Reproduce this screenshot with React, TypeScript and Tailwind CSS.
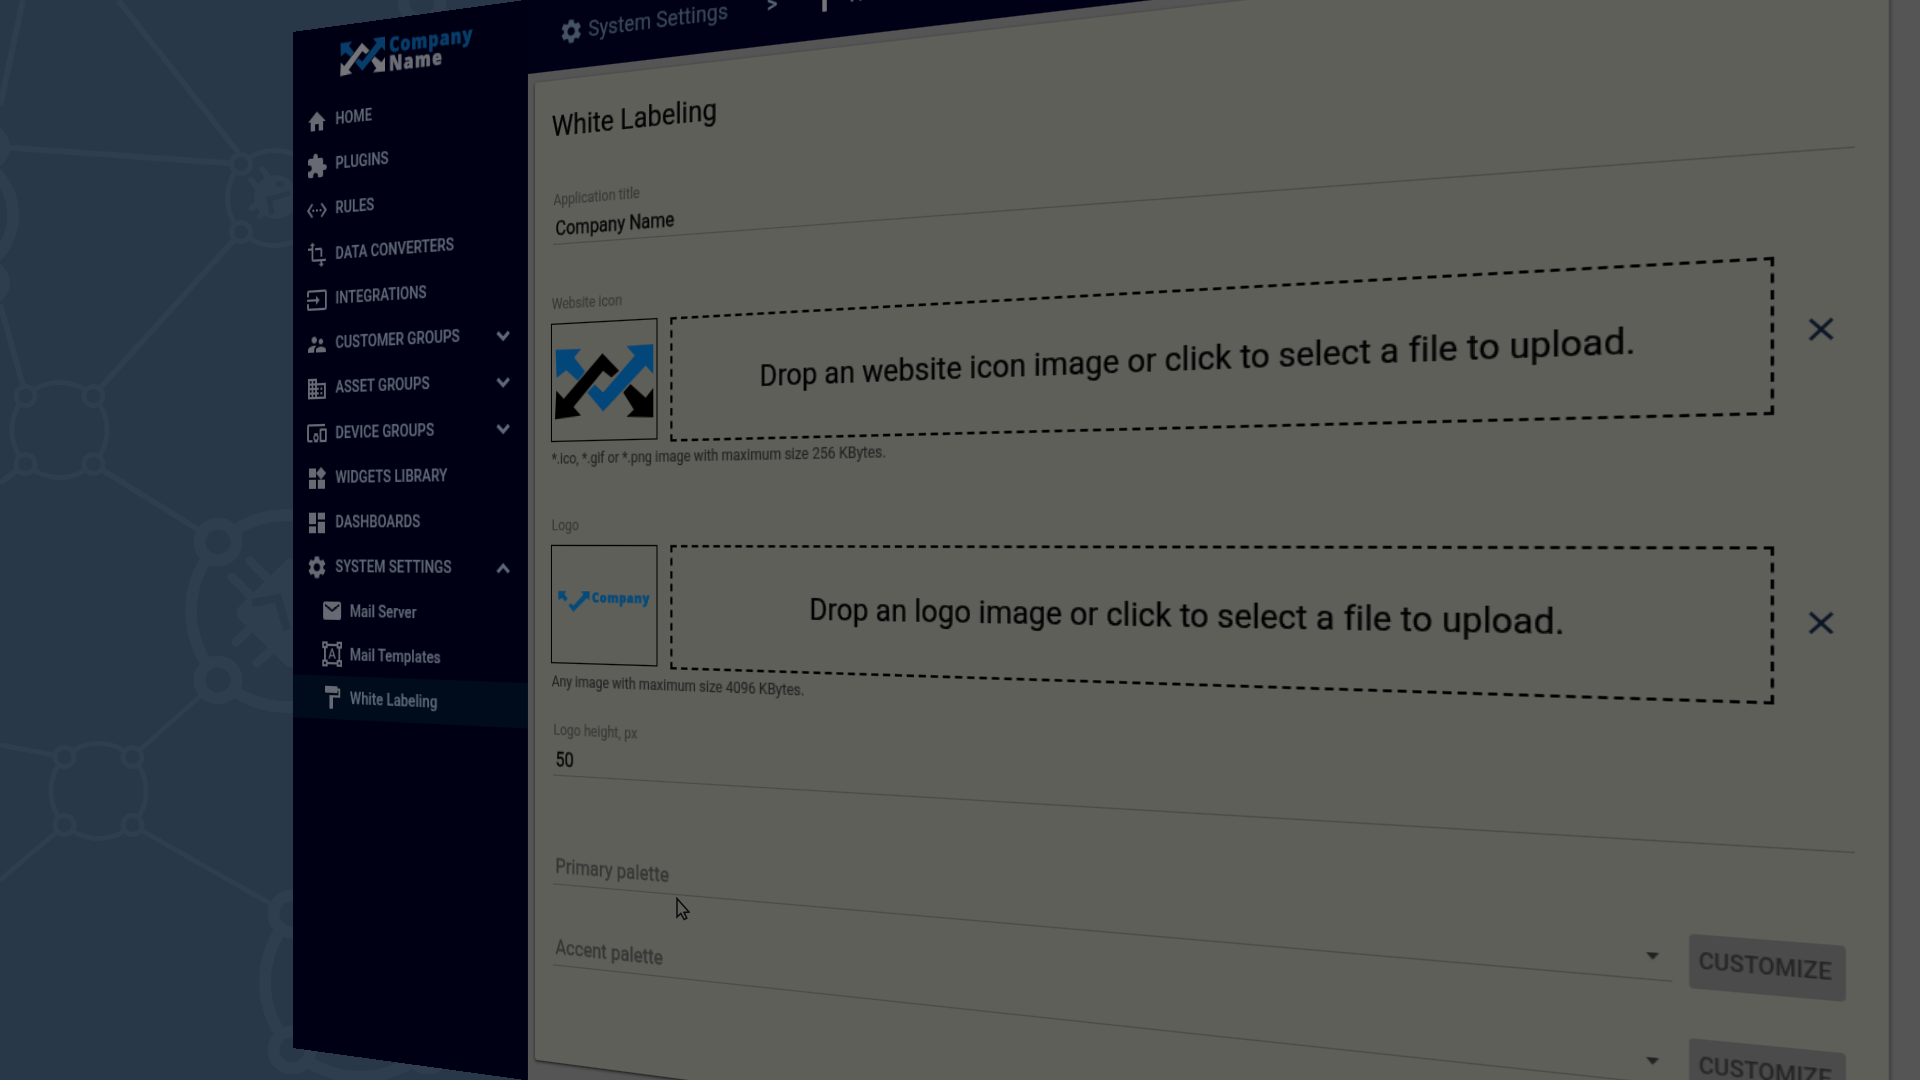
import type { ReactNode } from "react";
import type { IconType } from "react-icons";
import {
  MdHome,
  MdExtension,
  MdSettingsEthernet,
  MdTransform,
  MdInput,
  MdSupervisorAccount,
  MdDomain,
  MdDevicesOther,
  MdWidgets,
  MdDashboard,
  MdSettings,
  MdMail,
  MdFormatShapes,
  MdFormatPaint,
  MdClose,
} from "react-icons/md";

type MenuEntry = { label: string; icon: IconType; chevron?: "up" | "down" };

const menu: MenuEntry[] = [
  { label: "HOME", icon: MdHome },
  { label: "PLUGINS", icon: MdExtension },
  { label: "RULES", icon: MdSettingsEthernet },
  { label: "DATA CONVERTERS", icon: MdTransform },
  { label: "INTEGRATIONS", icon: MdInput },
  { label: "CUSTOMER GROUPS", icon: MdSupervisorAccount, chevron: "down" },
  { label: "ASSET GROUPS", icon: MdDomain, chevron: "down" },
  { label: "DEVICE GROUPS", icon: MdDevicesOther, chevron: "down" },
  { label: "WIDGETS LIBRARY", icon: MdWidgets },
  { label: "DASHBOARDS", icon: MdDashboard },
  { label: "SYSTEM SETTINGS", icon: MdSettings, chevron: "up" },
];

const subMenu: (MenuEntry & { active?: boolean })[] = [
  { label: "Mail Server", icon: MdMail },
  { label: "Mail Templates", icon: MdFormatShapes },
  { label: "White Labeling", icon: MdFormatPaint, active: true },
];

/* Four crossed arrows: blue pair and a second pair in the given tone. */
function Emblem({ className, blue, other }: { className: string; blue: string; other: string }) {
  return (
    <svg viewBox="0 0 299 216" preserveAspectRatio="none" className={className}>
      <g fill={blue}>
        <path d="M2 3L80 4L59 28L92 72L70 99L35 66L5 88Z" />
        <path d="M99 135L122 113L147 137L242 31L217 2L299 0L297 88L274 62L147 194Z" />
      </g>
      <g fill={other}>
        <path d="M0 213L4 126L27 152L145 20L195 74L172 93L147 72L57 178L80 204Z" />
        <path d="M229 115L274 157L297 128L297 216L217 212L239 191L207 139Z" />
      </g>
    </svg>
  );
}

function Chevron({ dir }: { dir: "up" | "down" }) {
  return (
    <svg
      viewBox="0 0 14 10"
      className={dir === "down" ? "mt-[3px] h-[10px] w-[14px]" : "h-[10px] w-[14px]"}
      fill="none"
      stroke="#5f6875"
      strokeWidth="3.1"
    >
      <path d={dir === "down" ? "M1.2 1.8L7 7.4L12.8 1.8" : "M1.2 8L7 2.4L12.8 8"} />
    </svg>
  );
}

function Ring({ x, y, r = 47.5, n = 34, node = 9.5, w = 5 }: { x: number; y: number; r?: number; n?: number; node?: number; w?: number }) {
  return (
    <g strokeWidth={w}>
      <circle cx={x} cy={y} r={r} />
      {[
        [-n, -n],
        [n, -n],
        [-n, n],
        [n, n],
      ].map(([dx, dy]) => (
        <circle key={`${dx},${dy}`} cx={x + dx} cy={y + dy} r={node} />
      ))}
    </g>
  );
}

function Network() {
  return (
    <svg viewBox="0 0 700 1080" className="absolute left-0 top-0 h-[1080px] w-[700px]" fill="#293848" stroke="#2f3e4e" strokeWidth="6">
      <path d="M23 0L0 106M118 0L241 156M0 147L241 164M241 232L93 396M0 304L26 396M93 464L218 542M26 464L0 483" />
      <path strokeWidth="5" d="M218 680L132 757M0 745L65 757M65 825L0 880M132 825L290 915" />
      <g strokeWidth="12">
        <circle cx="-47" cy="215" r="60" />
        <circle cx="-13" cy="147" r="17" />
        <circle cx="-13" cy="283" r="17" />
      </g>
      <Ring x={275} y={198} />
      <Ring x={59.5} y={430} />
      <Ring x={98.5} y={791} />
      <Ring x={287} y={611} r={96} n={69} node={18.5} w={12} />
      <Ring x={360} y={982} r={95} n={68} node={18.5} w={12} />
      <Ring x={491} y={-67} r={96} n={69} node={18.5} w={12} />
      <g fill="#2f3e4e" stroke="none">
        <rect x="250" y="572" width="82" height="82" rx="8" transform="rotate(45 291 613)" />
        <circle cx="276" cy="197" r="22" />
      </g>
      <g strokeLinecap="round" fill="none">
        <path strokeWidth="9" d="M250 561L268 579M232 577L250 595M236 642L254 625M257 663L274 647" />
        <path strokeWidth="6" d="M262 169L268 177M251 180L257 187M252 208L257 204M260 216L265 211" />
        <path stroke="#293848" strokeLinecap="butt" strokeWidth="8" d="M252 603L278 598L287 630" />
        <path stroke="#293848" strokeLinecap="butt" strokeWidth="5" d="M290 193L269 199L272 214M276 184L284 184" />
      </g>
    </svg>
  );
}

function Sidebar() {
  return (
    <aside className="flex w-[250.7px] shrink-0 flex-col bg-[#000014] font-medium text-[#5f6875]">
      <div className="flex h-[61.5px] items-start pl-[53px] pt-[15px]">
        <Emblem className="h-[30px] w-[49.4px]" blue="#083d69" other="#75757a" />
        <div className="ml-[4.2px] mt-[-0.2px] font-['Open_Sans'] text-[17px] font-extrabold leading-[16.6px] tracking-[0.95px] [-webkit-text-stroke:0.5px]">
          <div className="text-[#083d69]">Company</div>
          <div className="tracking-[1.3px] text-[#6b6e76]">Name</div>
        </div>
      </div>
      {menu.map(({ label, icon: Icon, chevron }) => (
        <div key={label} className="flex h-[39.28px] items-center pl-[15.3px] pr-[17.6px] text-[14px]">
          <Icon className="mt-px size-6 text-[#666a73]" />
          <span className="ml-[8.5px] flex-1 whitespace-nowrap pt-[0.2px] tracking-[0.12px] [-webkit-text-stroke:0.2px]">{label}</span>
          {chevron && <Chevron dir={chevron} />}
        </div>
      ))}
      {subMenu.map(({ label, icon: Icon, active }) => (
        <div
          key={label}
          className={
            active
              ? "flex h-[38px] items-center bg-[#000b1c] pl-[31.6px] text-[14px]"
              : "flex h-[38px] items-center pl-[31.6px] text-[14px]"
          }
        >
          <Icon className="size-6 text-[#666a73]" />
          <span className="ml-[8.1px] whitespace-nowrap tracking-[0.12px] [-webkit-text-stroke:0.2px]">{label}</span>
        </div>
      ))}
    </aside>
  );
}

function Toolbar() {
  return (
    <header className="flex h-[62px] shrink-0 items-center bg-[#000016] pl-[31.8px] text-[18px] text-[#3b4a5b]">
      <MdSettings className="size-6 text-[#465364]" />
      <span className="ml-[4.2px] mt-[-1px] w-[166.5px] whitespace-nowrap tracking-[0.12px] [-webkit-text-stroke:0.2px]">System Settings</span>
      <span className="mt-[-3px] w-[40px] text-[#5f6b7a] [-webkit-text-stroke:0.4px]">&gt;</span>
      <MdFormatPaint className="size-6 text-[#75757a]" />
      <span className="ml-[6px] mt-[-4px] whitespace-nowrap text-[#5f6b7a]">White Labeling</span>
    </header>
  );
}

function Field({ label, value, className }: { label: string; value: string; className: string }) {
  return (
    <div className={className}>
      <div className="ml-[1.4px] mr-[2.9px] border-b border-[#4a4a47] pb-[0.1px]">
        <div className="pl-[0.4px] text-[12px] leading-4 tracking-[0.03px] text-[#3a3a38] [-webkit-text-stroke:0.2px]">{label}</div>
        <div className="mt-[4.3px] pl-[2.5px] text-[16px] leading-6 text-[#050505] [-webkit-text-stroke:0.3px]">{value}</div>
      </div>
    </div>
  );
}

function Upload({ label, prompt, hint, preview, className }: { label: string; prompt: string; hint: string; preview: ReactNode; className: string }) {
  return (
    <div className={className}>
      <div className="text-[12px] leading-4 text-[#3a3a38] [-webkit-text-stroke:0.2px]">{label}</div>
      <div className="mt-[8px] flex h-[100px]">
        <div className="ml-[-0.5px] flex h-[98px] w-[102.8px] items-center justify-center border border-black">{preview}</div>
        <div className="ml-[11.6px] flex w-[812.6px] items-center justify-center border-2 border-dashed border-black text-[24px] tracking-[0.04px] text-[#020202] [-webkit-text-stroke:0.2px]">
          {prompt}
        </div>
        <MdClose className="ml-[14.4px] mt-[35.7px] size-6 text-[#0a1424]" />
      </div>
      <div className="mt-[4.4px] text-[12px] leading-4 text-[#242423] [-webkit-text-stroke:0.15px]">{hint}</div>
    </div>
  );
}

function PaletteRow({ label }: { label: string }) {
  return (
    <div className="flex h-[67.3px] items-start pl-[1.4px]">
      <div className="mt-[4.7px] flex w-[864.7px] items-center justify-between border-b border-[#4a4a47] pb-[2.1px] pl-[2.5px] pr-[8.2px] text-[16px] leading-6 tracking-[0.06px] text-[#363635] [-webkit-text-stroke:0.35px]">
        <span>{label}</span>
        <svg viewBox="0 0 8 5" className="h-[5px] w-2" fill="#222222">
          <path d="M0 0H8L4 4.8Z" />
        </svg>
      </div>
      <button className="ml-[10px] h-[34.5px] w-[90.8px] rounded-[3px] bg-[#4b4b4b] pr-[1.5px] text-[14px] font-medium text-[#252525]">
        CUSTOMIZE
      </button>
    </div>
  );
}

function Card() {
  return (
    <section className="ml-[7.6px] mt-[8px] flex h-[811.5px] w-[1008px] flex-col rounded-[2px] bg-[#5f5f5a] pl-[16.4px] pr-4 pt-[21.6px] shadow-[0_1px_3px_rgba(0,0,0,0.45),0_1px_2px_rgba(0,0,0,0.4)]">
      <h1 className="text-[24px] leading-8 text-[#020202] [-webkit-text-stroke:0.2px]">White Labeling</h1>
      <Field label="Application title" value="Company Name" className="mt-[37px]" />
      <Upload
        className="mt-[40.8px]"
        label="Website icon"
        prompt="Drop an website icon image or click to select a file to upload."
        hint="*.ico, *.gif or *.png image with maximum size 256 KBytes."
        preview={<Emblem className="mt-[2.5px] h-[59px] w-[95.8px]" blue="#03467a" other="#000000" />}
      />
      <Upload
        className="mt-[39px]"
        label="Logo"
        prompt="Drop an logo image or click to select a file to upload."
        hint="Any image with maximum size 4096 KBytes."
        preview={
          <div className="mt-[-6.5px] flex items-start">
            <Emblem className="mt-[3px] h-[19px] w-[31px]" blue="#044a7a" other="transparent" />
            <span className="ml-[2px] font-['Open_Sans'] text-[10.7px] font-extrabold leading-4 tracking-[0.55px] text-[#044a7a] [-webkit-text-stroke:0.4px]">
              Company
            </span>
          </div>
        }
      />
      <Field label="Logo height, px" value="50" className="mb-[58.3px] mt-[24.8px]" />
      <PaletteRow label="Primary palette" />
      <PaletteRow label="Accent palette" />
    </section>
  );
}

export default function App() {
  return (
    <div className="relative h-[1080px] w-[1920px] overflow-hidden bg-[#293848] font-[Roboto,sans-serif]">
      <Network />
      <div className="relative flex h-[900px] w-[1600px] origin-top-left overflow-hidden [transform:matrix3d(0.8101,-0.1288,0,-0.0002385,0,1.129,0,0,0,0,1,0,293,31.95,0,1)]">
        <Sidebar />
        <main className="flex flex-1 flex-col bg-[#555556]">
          <Toolbar />
          <Card />
        </main>
      </div>
      <svg viewBox="0 0 14 24" className="absolute left-[676px] top-[897px] h-6 w-[14px]" fill="#5f5f5c" stroke="#0c0c0c" strokeWidth="1.5">
        <path d="M1 1.5V20L4.8 16.4L8.2 22.6L10.8 21.2L8 15.4L13 15Z" />
      </svg>
    </div>
  );
}
